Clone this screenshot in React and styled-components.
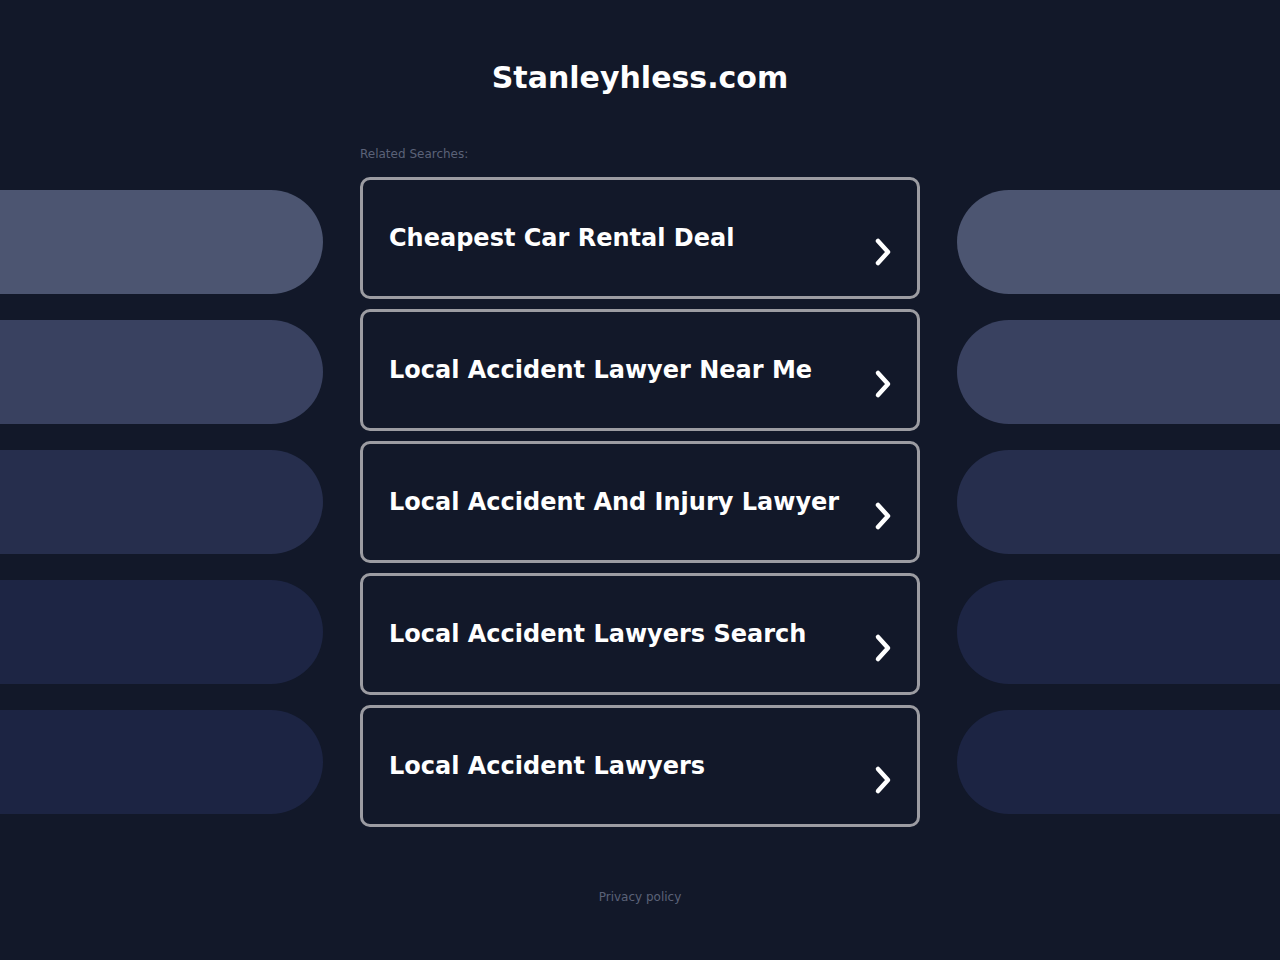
import React from "react";
import styled, { createGlobalStyle } from "styled-components";

const GlobalStyle = createGlobalStyle`
  html, body {
    margin: 0;
    padding: 0;
    background: #121829;
  }
  * {
    box-sizing: border-box;
  }
`;

const Page = styled.div`
  min-height: 960px;
  background: #121829;
  font-family: "DejaVu Sans", "Liberation Sans", sans-serif;
  color: #ffffff;
  overflow: hidden;
`;

const Title = styled.h1`
  margin: 0;
  padding-top: 59px;
  font-size: 30px;
  line-height: 38px;
  font-weight: 700;
  text-align: center;
  color: #ffffff;
`;

const Layout = styled.div`
  display: grid;
  grid-template-columns: 1fr 560px 1fr;
  margin-top: 49px;
`;

const Side = styled.div`
  display: flex;
  flex-direction: column;
  gap: 26px;
  padding-top: 44px;
  align-items: ${({ $side }) => ($side === "left" ? "flex-end" : "flex-start")};
`;

const Pill = styled.div`
  height: 104px;
  width: calc(100% - 37px);
  background: ${({ $tone }) => $tone};
  border-radius: ${({ $side }) => ($side === "left" ? "0 52px 52px 0" : "52px 0 0 52px")};
  margin-${({ $side }) => ($side === "left" ? "right" : "left")}: 37px;
`;

const Center = styled.div`
  display: flex;
  flex-direction: column;
`;

const Label = styled.div`
  font-size: 12px;
  line-height: 16px;
  color: #5b6278;
  margin-bottom: 15px;
`;

const Cards = styled.div`
  display: flex;
  flex-direction: column;
  gap: 10px;
`;

const Card = styled.a`
  display: flex;
  align-items: center;
  justify-content: space-between;
  height: 122px;
  padding: 0 26px;
  border: 3px solid #9c9ca2;
  border-radius: 10px;
  background: #121829;
  color: #ffffff;
  text-decoration: none;
  cursor: pointer;
`;

const CardText = styled.span`
  font-size: 24px;
  font-weight: 700;
  line-height: 30px;
`;

const Arrow = styled.svg`
  width: 20px;
  height: 30px;
  margin-top: 28px;
  margin-right: -2px;
  flex-shrink: 0;
`;

const Footer = styled.div`
  margin-top: 62px;
  text-align: center;
  font-size: 12px;
  line-height: 16px;
  color: #5b6278;
`;

const searches = [
  "Cheapest Car Rental Deal",
  "Local Accident Lawyer Near Me",
  "Local Accident And Injury Lawyer",
  "Local Accident Lawyers Search",
  "Local Accident Lawyers",
];

const tones = ["#4c5571", "#394160", "#262e4d", "#1d2544", "#1c2443"];

const Chevron = () => (
  <Arrow viewBox="0 0 20 30">
    <polyline
      points="5,4 15,15 5,26"
      fill="none"
      stroke="#ffffff"
      strokeWidth="4.5"
      strokeLinecap="round"
      strokeLinejoin="round"
    />
  </Arrow>
);

const App = () => (
  <>
    <GlobalStyle />
    <Page>
      <Title>Stanleyhless.com</Title>
      <Layout>
        <Side $side="left">
          {tones.map((t) => (
            <Pill key={t} $tone={t} $side="left" />
          ))}
        </Side>
        <Center>
          <Label>Related Searches:</Label>
          <Cards>
            {searches.map((s) => (
              <Card key={s}>
                <CardText>{s}</CardText>
                <Chevron />
              </Card>
            ))}
          </Cards>
          <Footer>Privacy policy</Footer>
        </Center>
        <Side $side="right">
          {tones.map((t) => (
            <Pill key={t} $tone={t} $side="right" />
          ))}
        </Side>
      </Layout>
    </Page>
  </>
);

export default App;
